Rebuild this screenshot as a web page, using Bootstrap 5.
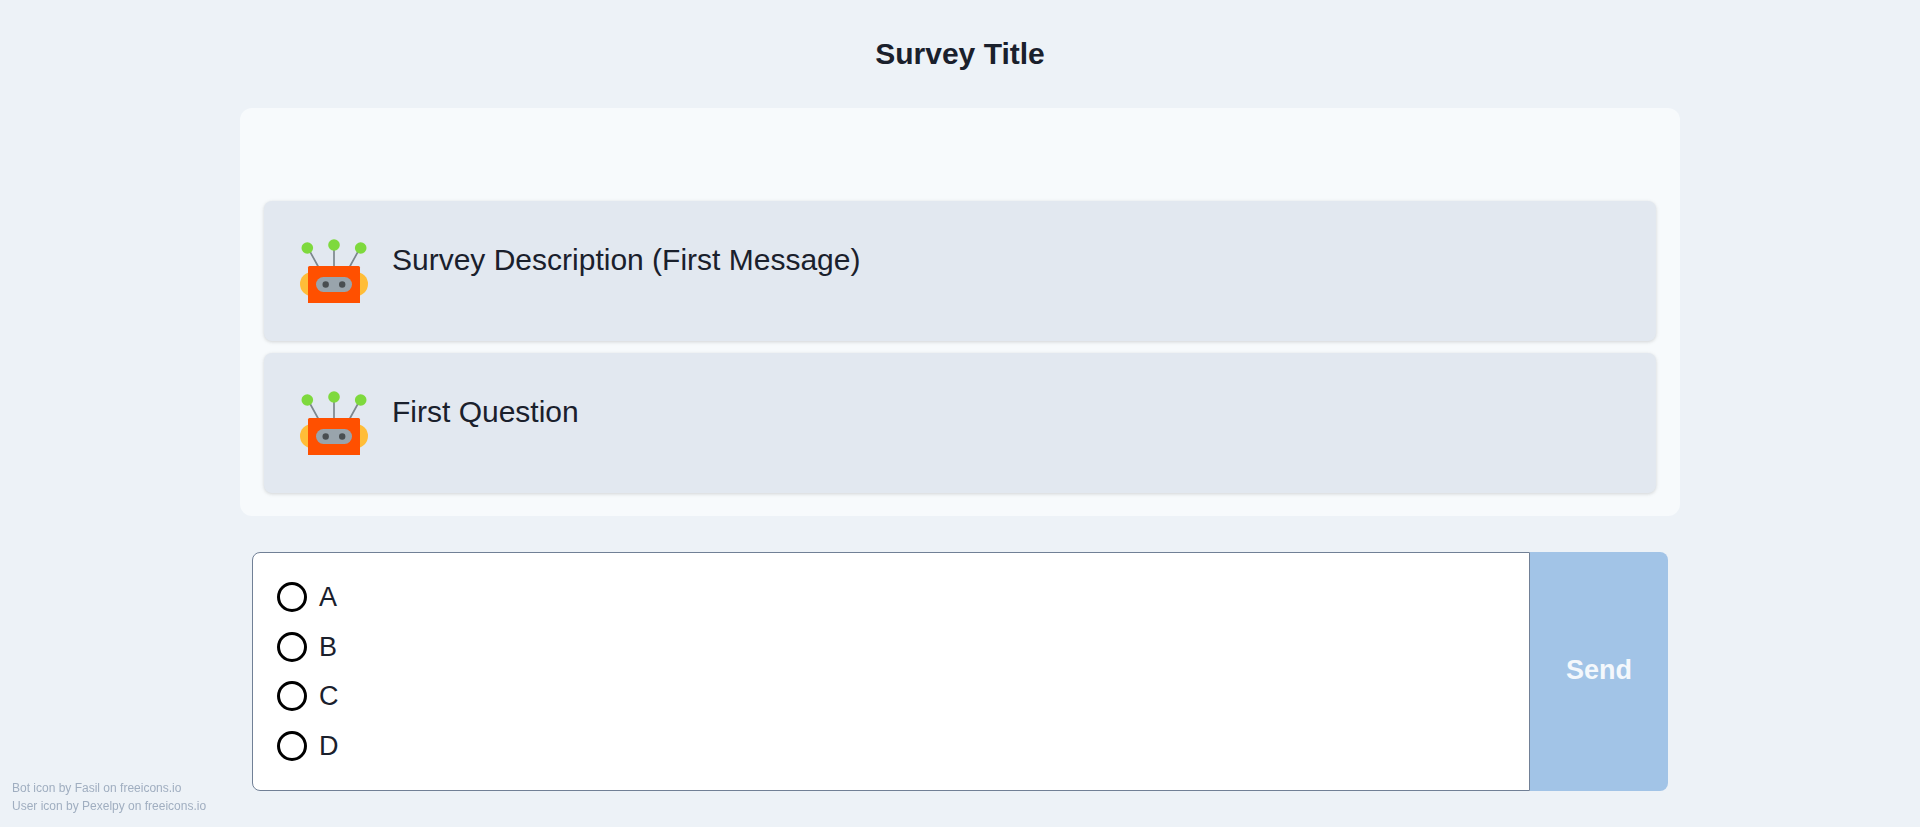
<!DOCTYPE html>
<html lang="en">
<head>
<meta charset="utf-8">
<meta name="viewport" content="width=device-width, initial-scale=1">
<title>Survey Title</title>
<link href="https://cdn.jsdelivr.net/npm/bootstrap@5.3.0/dist/css/bootstrap.min.css" rel="stylesheet">
<style>
  body { background: #edf2f7; color: #1a202c; font-family: "Liberation Sans", Arial, sans-serif; }
  .survey { width: 75%; }
  .survey-title { font-size: 30px; line-height: 36px; padding: 36px 0; }
  .chat-panel { background: #f7fafc; border-radius: 12px; padding: 93px 24px 23px; gap: 12px; }
  .message { background: #e2e8f0; border-radius: 8px; padding: 36px; min-height: 140px; gap: 24px; box-shadow: 0 1px 4px rgba(0,0,0,.1), 0 1px 3px rgba(0,0,0,.06); }
  .bot-icon { width: 68px; height: 68px; }
  .message-text { font-size: 30px; line-height: 45px; }
  .answer { margin: 36px 12px; }
  .options { background: #fff; border: 1px solid #718096; border-radius: 8px 0 0 8px; padding: 29px 24px; min-height: 239px; }
  .option { font-size: 27px; line-height: 30px; gap: 12px; }
  .option .form-check-input { width: 30px; height: 30px; border: 3px solid #000; background-color: #fff; }
  .option .form-check-input:checked { background-color: #000; }
  .send { background: #a2c4e7; color: #f4f8fc; border-radius: 0 8px 8px 0; font-size: 27px; padding: 0 36px 2px; }
  .credits { font-size: 12px; line-height: 18px; padding: 12px; color: #a0aec0; }
</style>
</head>
<body class="min-vh-100">
<svg class="d-none" xmlns="http://www.w3.org/2000/svg">
  <symbol id="bot" viewBox="0 -2 68 68">
    <path d="M8 9 19 29M34 6v22M60 9 49 29" stroke="#7d878e" stroke-width="1.700" fill="none"/>
    <g fill="#7ed93d"><circle cx="7.300" cy="9" r="5.800"/><circle cx="34" cy="6" r="5.800"/><circle cx="60.700" cy="9" r="5.800"/></g>
    <circle cx="12" cy="45" r="12" fill="#ffbd38"/><circle cx="56" cy="45" r="12" fill="#ffbd38"/>
    <path d="M8 28.500a1.500 1.500 0 0 1 1.500-1.500h49a1.500 1.500 0 0 1 1.500 1.500V64H8z" fill="#ff5000"/>
    <rect x="16" y="38" width="36" height="15" rx="7.500" fill="#99a4ac"/>
    <circle cx="25.700" cy="45.500" r="3.200" fill="#494e51"/><circle cx="42.200" cy="45.500" r="3.200" fill="#494e51"/>
  </symbol>
</svg>
<main class="survey mx-auto">
  <h1 class="survey-title text-center fw-bold m-0">Survey Title</h1>
  <section class="chat-panel d-flex flex-column">
    <div class="message d-flex align-items-start">
      <svg class="bot-icon flex-shrink-0" role="img" aria-label="Bot"><use href="#bot"/></svg>
      <p class="message-text m-0">Survey Description (First Message)</p>
    </div>
    <div class="message d-flex align-items-start">
      <svg class="bot-icon flex-shrink-0" role="img" aria-label="Bot"><use href="#bot"/></svg>
      <p class="message-text m-0">First Question</p>
    </div>
  </section>
  <form class="answer d-flex">
    <div class="options flex-grow-1 d-flex flex-column justify-content-between">
      <div class="option d-flex align-items-center"><input class="form-check-input m-0" type="radio" name="answer" id="a"><label for="a">A</label></div>
      <div class="option d-flex align-items-center"><input class="form-check-input m-0" type="radio" name="answer" id="b"><label for="b">B</label></div>
      <div class="option d-flex align-items-center"><input class="form-check-input m-0" type="radio" name="answer" id="c"><label for="c">C</label></div>
      <div class="option d-flex align-items-center"><input class="form-check-input m-0" type="radio" name="answer" id="d"><label for="d">D</label></div>
    </div>
    <button class="send border-0 fw-bold" type="button">Send</button>
  </form>
</main>
<footer class="credits fixed-bottom pe-none">
  <div>Bot icon by Fasil on freeicons.io</div>
  <div>User icon by Pexelpy on freeicons.io</div>
</footer>
<script src="https://cdn.jsdelivr.net/npm/bootstrap@5.3.0/dist/js/bootstrap.bundle.min.js"></script>
</body>
</html>
